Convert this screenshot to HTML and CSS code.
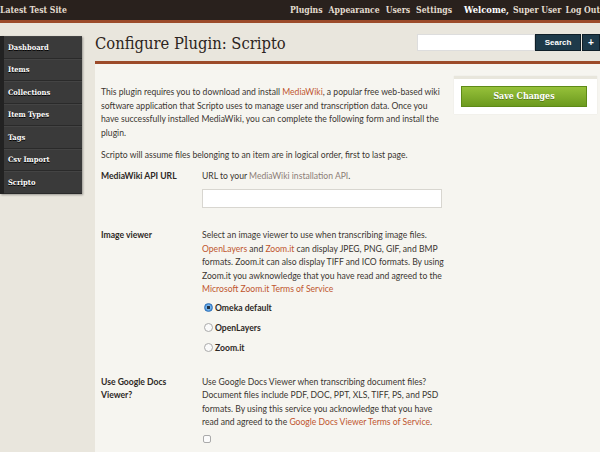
FILE: index.html
```html
<!DOCTYPE html>
<html lang="en">
<head>
<meta charset="utf-8">
<title>Configure Plugin: Scripto</title>
<link rel="stylesheet" href="styles.css">
</head>
<body>
<header class="topbar">
  <a class="site-title" href="#">Latest Test Site</a>
  <nav class="global-nav">
    <a href="#">Plugins</a>
    <a href="#">Appearance</a>
    <a href="#">Users</a>
    <a href="#">Settings</a>
  </nav>
  <div class="user-nav">
    <span class="welcome">Welcome,</span>
    <a href="#">Super User</a>
    <a href="#">Log Out</a>
  </div>
</header>
<div class="layout">
  <ul class="sidebar">
    <li><a href="#">Dashboard</a></li>
    <li><a href="#">Items</a></li>
    <li><a href="#">Collections</a></li>
    <li><a href="#">Item Types</a></li>
    <li><a href="#">Tags</a></li>
    <li><a href="#">Csv Import</a></li>
    <li><a href="#">Scripto</a></li>
  </ul>
  <main class="main">
    <div class="title-row">
      <h1 class="page-title">Configure Plugin: Scripto</h1>
      <form class="search">
        <input class="search-input" type="text">
        <button class="search-btn" type="button">Search</button>
        <button class="plus-btn" type="button">+</button>
      </form>
    </div>
    <div class="panel">
      <div class="content">
        <p class="intro"><span>This plugin requires you to download and install </span><a href="#">MediaWiki</a><span>, a popular free web-based wiki software application that Scripto uses to manage user and transcription data. Once you have successfully installed MediaWiki, you can complete the following form and install the plugin.</span></p>
        <p class="intro second">Scripto will assume files belonging to an item are in logical order, first to last page.</p>

        <div class="field">
          <label class="field-label">MediaWiki API URL</label>
          <div class="field-body">
            <p class="explain">URL to your <a class="muted" href="#">MediaWiki installation API</a>.</p>
            <input class="text-input" type="text">
          </div>
        </div>

        <div class="field">
          <label class="field-label">Image viewer</label>
          <div class="field-body">
            <p class="explain">Select an image viewer to use when transcribing image files. <a href="#">OpenLayers</a> and <a href="#">Zoom.it</a> can display JPEG, PNG, GIF, and BMP formats. Zoom.it can also display TIFF and ICO formats. By using Zoom.it you awknowledge that you have read and agreed to the <a href="#">Microsoft Zoom.it Terms of Service</a></p>
            <ul class="radios">
              <li><span class="radio checked"></span>Omeka default</li>
              <li><span class="radio"></span>OpenLayers</li>
              <li><span class="radio"></span>Zoom.it</li>
            </ul>
          </div>
        </div>

        <div class="field">
          <label class="field-label">Use Google Docs Viewer?</label>
          <div class="field-body">
            <p class="explain">Use Google Docs Viewer when transcribing document files? Document files include PDF, DOC, PPT, XLS, TIFF, PS, and PSD formats. By using this service you acknowledge that you have read and agreed to the <a href="#">Google Docs Viewer Terms of Service</a>.</p>
            <span class="checkbox"></span>
          </div>
        </div>
      </div>
      <aside class="save-panel">
        <button class="save-btn" type="button">Save Changes</button>
      </aside>
    </div>
  </main>
</div>
</body>
</html>
```
FILE: styles.css
```css
* { box-sizing: border-box; }
html, body { margin: 0; padding: 0; }
body {
  width: 600px;
  height: 452px;
  overflow: hidden;
  background: #e9e6dd;
  font-family: "Lato", "Liberation Sans", sans-serif;
  color: #3b3531;
}
a { text-decoration: none; color: inherit; }

.topbar {
  height: 23px;
  background: #29211d;
  border-bottom: 3px solid #9c4b2a;
  display: flex;
  align-items: center;
  padding-bottom: 1px;
  font-family: "DejaVu Serif Condensed", "DejaVu Serif", serif;
  font-stretch: condensed;
  font-weight: bold;
  font-size: 8.6px;
  color: #e3dccf;
  white-space: nowrap;
}
.site-title { margin-left: 0; }
.global-nav { margin-left: auto; display: flex; gap: 6px; }
.user-nav { margin-left: 12px; display: flex; gap: 4px; align-items: baseline; }
.welcome { color: #fff; font-size: 9.3px; }

.layout { display: flex; align-items: flex-start; }

.sidebar {
  list-style: none;
  margin: 13px 0 0 0;
  padding: 0;
  width: 82px;
  background: #3a3a3a;
  border-left: 4px solid #222;
  box-shadow: 1px 1px 2px rgba(0,0,0,0.35);
}
.sidebar li {
  height: 22.5px;
  display: flex;
  align-items: center;
  padding-left: 4px;
  border-bottom: 1px solid #2a2a2a;
  border-top: 1px solid #444;
  font-family: "DejaVu Serif Condensed", "DejaVu Serif", serif;
  font-stretch: condensed;
  font-weight: bold;
  font-size: 7.5px;
  color: #fff;
  text-shadow: 0 1px 0 #000;
}

.main { flex: 1; margin-left: 13px; }
.title-row {
  height: 41px;
  display: flex;
  align-items: flex-start;
  justify-content: space-between;
  border-bottom: 3px solid #9c4b2a;
}
.page-title {
  margin: 11px 0 0 0;
  font-family: "DejaVu Serif Condensed", "DejaVu Serif", serif;
  font-stretch: condensed;
  font-weight: normal;
  font-size: 16.4px;
  color: #2c2420;
  line-height: 20px;
}
.search { display: flex; margin-top: 11px; }
.search-input {
  width: 118px; height: 17px;
  border: 1px solid #ddd; background: #fff; margin: 0;
}
.search-btn, .plus-btn {
  height: 17px; margin: 0;
  background: #1e3a4a;
  border: 1px solid #101f28;
  color: #fff;
  font-family: "Liberation Sans", sans-serif;
  font-weight: bold;
  font-size: 8px;
  padding: 0;
}
.search-btn { width: 46px; }
.plus-btn { width: 18px; font-size: 10px; margin-left: 1px; }

.panel {
  background: #f6f5f0;
  display: flex;
  align-items: flex-start;
  min-height: 400px;
}
.content { width: 347px; padding: 22px 0 0 6px; }
.intro, .explain {
  margin: 0;
  font-size: 8.6px;
  line-height: 13.5px;
}
.intro.second { margin-top: 9px; }
.content a { color: #c0552f; }
.content a.muted { color: #8c7d76; }

.field { display: flex; margin-top: 7px; }
.field-label {
  width: 101px;
  flex: none;
  font-weight: bold;
  font-size: 8.6px;
  line-height: 13.5px;
  color: #2d2825;
  padding-right: 20px;
}
.field-body { width: 246px; flex: none; }
.text-input {
  display: block;
  width: 240px; height: 19px;
  margin: 6px 0 14px 0;
  border: 1px solid #d8d6d0;
  background: #fff;
}
.radios { list-style: none; margin: 1px 0 11px 2px; padding: 0; }
.radios li {
  display: flex; align-items: center;
  height: 20px;
  font-size: 8.6px;
  font-weight: bold;
  color: #2d2825;
}
.radio {
  width: 9px; height: 9px; border-radius: 50%;
  border: 1px solid #aaa;
  background: #fafafa;
  margin-right: 2px;
  display: inline-block;
}
.radio.checked {
  background: radial-gradient(circle, #203040 0 1.4px, #7fb8ea 1.8px, #3d8ddc 4px);
  border-color: #3473b8;
}
.checkbox {
  display: block;
  width: 8px; height: 8px;
  margin: 5px 0 0 1px;
  border: 1px solid #aaa;
  border-radius: 2px;
  background: #fbfbfb;
}

.save-panel {
  margin: 12px 0 0 12px;
  width: 143px;
  padding: 4px 8px 7px 7px;
  background: #fff;
  border-top: 3px solid #e8e6dc;
  box-shadow: 0 0 1px rgba(0,0,0,0.1);
}
.save-btn {
  width: 126px; height: 21px;
  background: linear-gradient(#96c13a, #6c9a1e);
  border: 1px solid #5e8a17;
  color: #fff;
  font-family: "DejaVu Serif Condensed", "DejaVu Serif", serif;
  font-stretch: condensed;
  font-weight: bold;
  font-size: 8.8px;
  text-shadow: 0 1px 0 rgba(0,0,0,0.3);
}
```
